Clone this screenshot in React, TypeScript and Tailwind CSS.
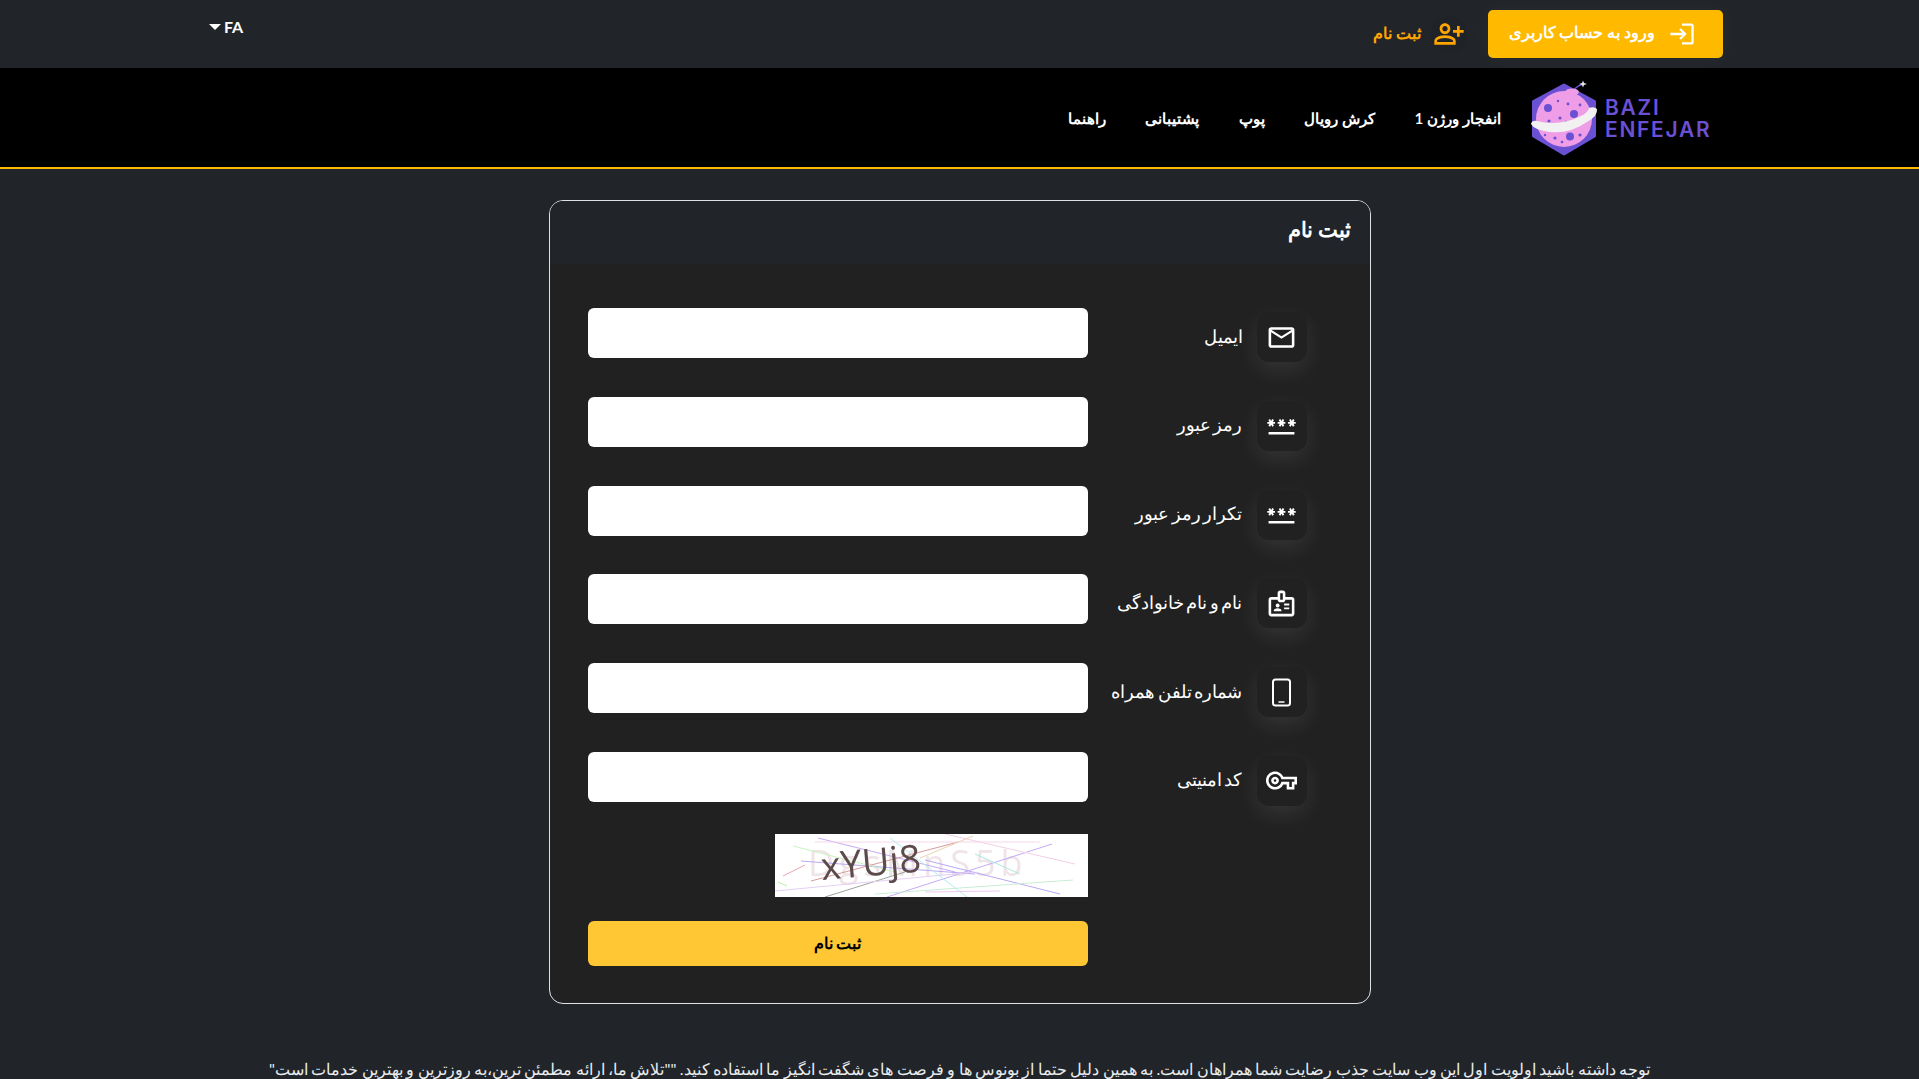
import {
  MdOutlineMailOutline,
  MdPassword,
  MdOutlineBadge,
  MdOutlineVpnKey,
  MdOutlinePersonAddAlt,
  MdLogin,
} from "react-icons/md";

const navItems = ["انفجار ورژن 1", "کرش رویال", "پوپ", "پشتیبانی", "راهنما"];

const PhoneIcon = ({ className }: { className?: string }) => (
  <svg width="31" height="31" viewBox="0 0 31 31" className={className}>
    <rect x="7" y="2.5" width="17" height="26" rx="2.5" fill="none" stroke="currentColor" strokeWidth="2" />
    <line x1="12.5" y1="25" x2="18.5" y2="25" stroke="currentColor" strokeWidth="1.5" />
  </svg>
);

const fields = [
  { label: "ایمیل", icon: MdOutlineMailOutline },
  { label: "رمز عبور", icon: MdPassword },
  { label: "تکرار رمز عبور", icon: MdPassword },
  { label: "نام و نام خانوادگی", icon: MdOutlineBadge },
  { label: "شماره تلفن همراه", icon: PhoneIcon },
  { label: "کد امنیتی", icon: MdOutlineVpnKey },
];

const craters = [
  [18, 28, 4],
  [44, 34, 4],
  [40, 56.5, 4],
  [30, 38, 1.6],
  [19, 41, 1.6],
  [38, 24, 1.4],
  [28, 21, 1.2],
  [50, 25, 1.4],
  [25, 58, 1.6],
  [50, 55, 1.6],
  [32, 62, 1.3],
  [15, 55, 1.2],
  [36, 42, 1.2],
];

const Logo = () => (
  <div dir="ltr" className="flex items-center w-[182px] h-[76px]">
    <svg width="70" height="76" viewBox="0 0 70 76" className="shrink-0">
      <path d="M34 5 L64.5 21.5 L64.5 56 L34 74 L3.5 56 L3.5 21.5 Z" fill="#6a50d3" stroke="#6a50d3" strokeWidth="3" strokeLinejoin="round" />
      <path d="M44 10 Q48 5 53 4.5" stroke="#6a50d3" strokeWidth="1.5" fill="none" />
      <path d="M53 0.5 L54 3 L57 4 L54 5 L53 7.5 L52 5 L49 4 L52 3 Z" fill="#e8e8e8" />
      <circle cx="34" cy="39" r="28" fill="#ee9de6" />
      <ellipse cx="42" cy="12" rx="7" ry="3.5" fill="#ee9de6" />
      {craters.map(([cx, cy, r], i) => (
        <circle key={i} cx={cx} cy={cy} r={r} fill="#6a50d3" />
      ))}
      <path d="M1 44 Q2 40 7 41 Q30 47 53 35 Q58 32 59 28 Q64 26 67 29 Q68 36 57 42 Q40 54 20 52 Q4 50 1 44 Z" fill="#f1f1f1" />
    </svg>
    <div className="ml-[5px] font-['Inter',sans-serif] font-semibold text-[#6a50d3] text-[21px] leading-[22px] tracking-[1.7px] mt-[2px]">
      <div>BAZI</div>
      <div>ENFEJAR</div>
    </div>
  </div>
);

const Captcha = () => (
  <svg width="313" height="63" viewBox="0 0 313 63" className="bg-white blur-[0.5px] [direction:ltr]">
    <text x="33" y="42" fontFamily="Open Sans" fontSize="36" letterSpacing="5" fill="#efe4e7">
      DgsMnS5b
    </text>
    <g strokeWidth="1" fill="none">
      <line x1="43" y1="4" x2="180" y2="38" stroke="#c9a8f5" />
      <line x1="26" y1="27" x2="200" y2="40" stroke="#b9a8f5" />
      <line x1="8" y1="42" x2="30" y2="31" stroke="#eba5b0" />
      <line x1="36" y1="47" x2="183" y2="8" stroke="#d89a9a" />
      <line x1="50" y1="63" x2="130" y2="38" stroke="#9aa59a" />
      <line x1="112" y1="63" x2="277" y2="10" stroke="#c2aaf5" />
      <line x1="150" y1="26" x2="285" y2="60" stroke="#b8a8f5" />
      <line x1="170" y1="0" x2="300" y2="30" stroke="#f3cfe6" />
      <line x1="40" y1="8" x2="265" y2="8" stroke="#f5d6ea" />
      <line x1="0" y1="57" x2="200" y2="38" stroke="#e5cff5" />
      <line x1="18" y1="12" x2="120" y2="38" stroke="#c8f5c0" />
      <line x1="100" y1="60" x2="298" y2="46" stroke="#c8ecd8" />
      <line x1="115" y1="4" x2="192" y2="63" stroke="#b0ecec" />
      <line x1="200" y1="20" x2="245" y2="40" stroke="#a8e8e0" />
      <line x1="150" y1="58" x2="225" y2="57" stroke="#f0c8f0" />
      <line x1="145" y1="24" x2="198" y2="2" stroke="#e8d4b0" />
      <line x1="3" y1="48" x2="12" y2="52" stroke="#b8f0a8" />
    </g>
    <text x="47" y="46" fontFamily="Open Sans" fontSize="38" fill="#5d4a4a" transform="rotate(-5 47 46)">
      xYUj8
    </text>
  </svg>
);

const App = () => {
  return (
    <div
      dir="rtl"
      className="h-[1079px] overflow-hidden bg-[#212529] text-white font-['Lato','Noto_Sans',sans-serif]"
    >
      <header className="h-[68px] flex items-start justify-between pr-[196px] pl-[209px]">
        <div className="flex items-center gap-[10px] mt-[10px]">
          <button className="w-[235px] h-[48px] rounded-[5px] bg-[#ffba00] flex items-center pr-[27px] gap-[13px] shadow-[0_0_24px_rgba(255,255,255,0.04)]">
            <MdLogin className="text-[28px] text-white" />
            <span className="text-[15.5px] font-bold pb-[2px]">ورود به حساب کاربری</span>
          </button>
          <div className="flex items-center text-[#ffa500] mr-[11px] gap-[10px]">
            <span className="w-[36px] h-[36px] rounded-full flex items-center justify-center bg-[#1f2226]">
              <MdOutlinePersonAddAlt className="text-[32px]" />
            </span>
            <span className="text-[16px] font-semibold pb-[3px]">ثبت نام</span>
          </div>
        </div>
        <div dir="ltr" className="flex items-center gap-[3px] mt-[18px] text-[16px] font-bold leading-[18px]">
          <span className="w-0 h-0 border-x-[6px] border-x-transparent border-t-[6px] border-t-white" />
          <span>FA</span>
        </div>
      </header>

      <nav className="h-[101px] bg-black border-b-[2px] border-b-[#ffba00] flex items-center pr-[207px]">
        <Logo />
        <ul className="flex items-center gap-[39.5px] mr-[29px] pt-[2px] text-[15.2px] font-semibold">
          {navItems.map((item) => (
            <li key={item}>{item}</li>
          ))}
        </ul>
      </nav>

      <main className="flex flex-col items-center pt-[31px]">
        <section className="w-[822px] h-[804px] border border-[#dee2e6] rounded-[14px] overflow-hidden bg-[#212121]">
          <div className="h-[63px] bg-[#212529] pr-[18px] pb-[8px] flex items-center">
            <h1 className="text-[21px] font-bold">ثبت نام</h1>
          </div>
          <form className="pt-[44px] pr-[63px] pl-[38px]">
            {fields.map((field, i) => (
              <div key={i} className="flex items-start justify-between h-[88.8px]">
                <div className="flex items-center gap-[14px] mt-[4px]">
                  <span className="w-[50px] h-[50px] rounded-[12px] bg-[#212121] shadow-[0_8px_22px_rgba(255,255,255,0.09)] flex items-center justify-center">
                    <field.icon className="text-[31px] text-white" />
                  </span>
                  <label className="text-[18px] [word-spacing:-2px] pb-[2px]">{field.label}</label>
                </div>
                <input type="text" className="w-[500px] h-[50px] rounded-[6px] bg-white" />
              </div>
            ))}
            <div className="flex justify-end -mt-[7px]">
              <div className="w-[500px] flex flex-col items-start">
                <Captcha />
              </div>
            </div>
            <div className="flex justify-end mt-[24px]">
              <button
                type="button"
                className="w-[500px] h-[45px] rounded-[6px] bg-[#ffc733] text-black text-[16px] font-semibold"
              >
                ثبت نام
              </button>
            </div>
          </form>
        </section>
        <p className="mt-[53px] text-center text-[16px] [word-spacing:-0.7px] text-[#e9ecef] whitespace-nowrap">
          توجه داشته باشید اولویت اول این وب سایت جذب رضایت شما همراهان است. به همین دلیل حتما از بونوس ها و فرصت های شگفت انگیز ما استفاده کنید. ""تلاش ما، ارائه مطمئن ترین،به روزترین و بهترین خدمات است"
        </p>
      </main>
    </div>
  );
};

export default App;
